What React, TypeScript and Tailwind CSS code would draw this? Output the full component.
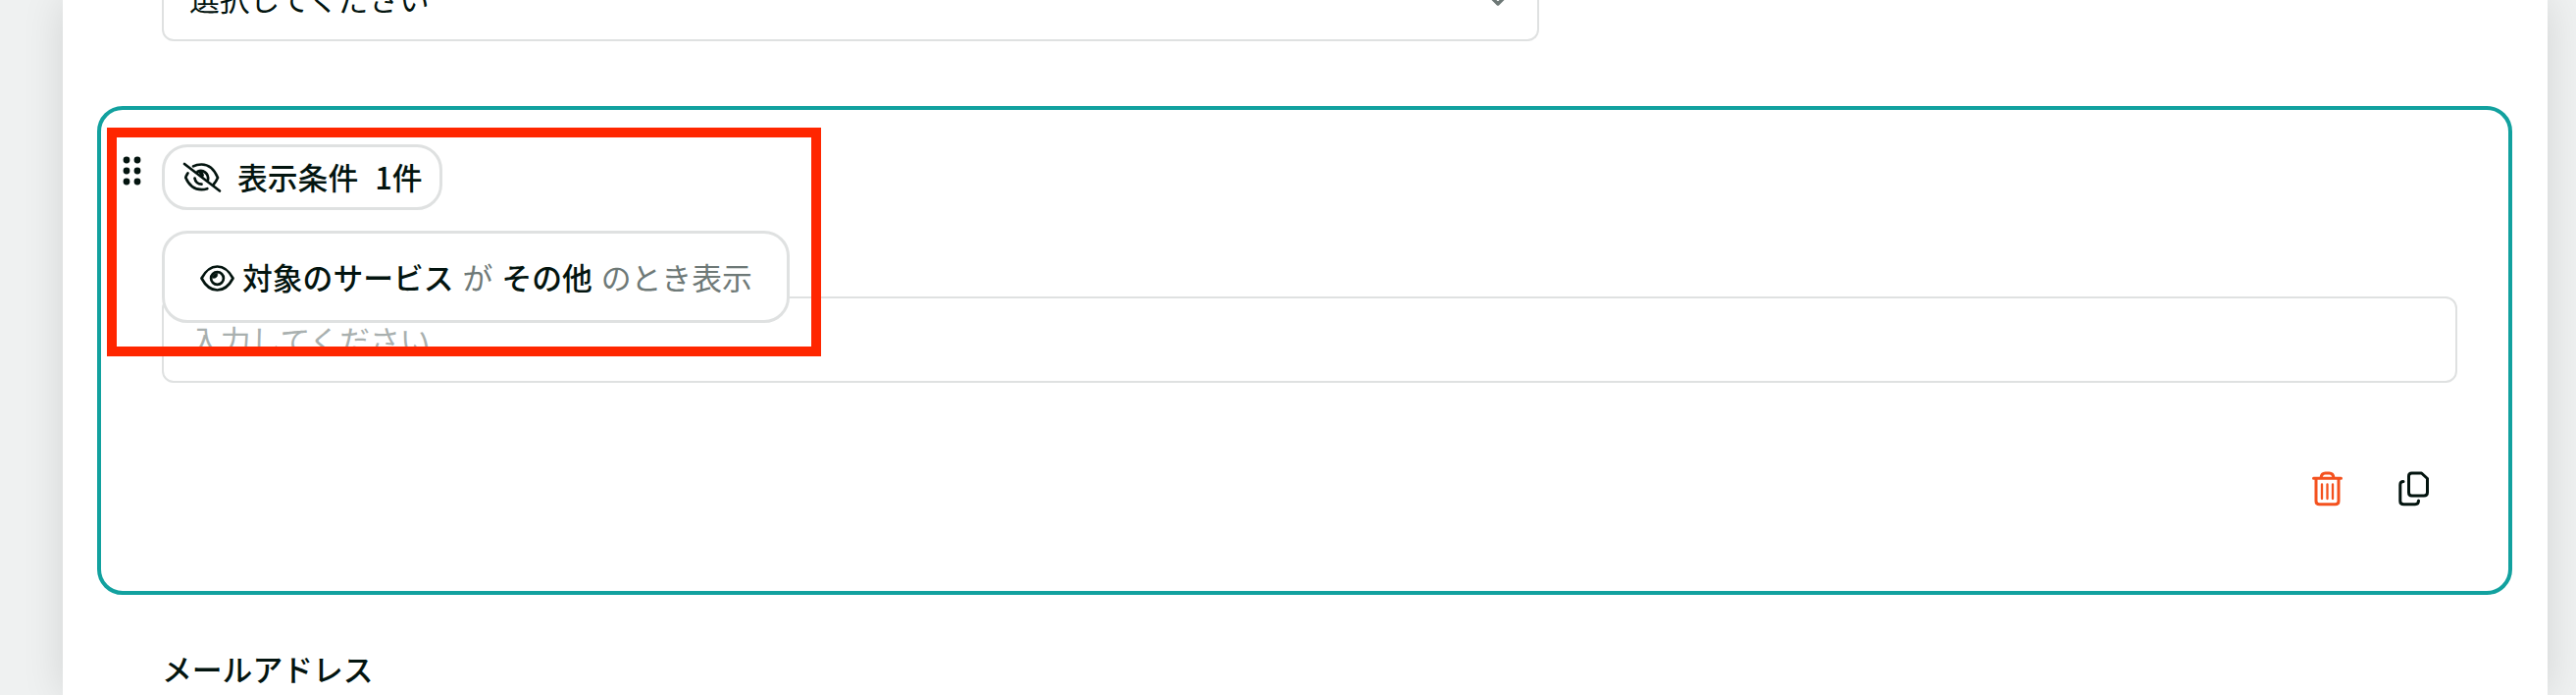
import React from "react";

const Eye = () => (
  <svg className="relative top-[1px] left-[0.5px] h-[27px] w-[35px] shrink-0 text-[#03140f]" viewBox="0 0 35 27" fill="none" stroke="currentColor" strokeWidth="2.7" strokeLinejoin="round">
    <path d="M1.5 13.5C6 5 11 1.500 17.5 1.500S29 5 33.5 13.5C29 22 24 25.500 17.5 25.500S6 22 1.500 13.500Z" />
    <circle cx="17.5" cy="13.500" r="6.400" />
    <path d="M17.600 8.500C18.400 11.500 16 14 12.600 13.200C12.600 10.800 14.600 8.500 17.600 8.500Z" fill="currentColor" strokeWidth="0.6" />
  </svg>
);

const EyeOff = () => (
  <svg className="relative left-[0.5px] h-[32px] w-[40px] shrink-0" viewBox="0 0 40 32" fill="none" stroke="currentColor" strokeWidth="2.7" strokeLinecap="round">
    <path d="M11 4.400C13.500 3 16.500 2.500 19.500 2.500C26 2.500 32 6.500 36 16C34.900 18.600 33.600 20.800 31.800 22.700" />
    <path d="M5.500 11.300C4.700 12.700 3.500 14.500 3.300 16C7 24.500 13 28.200 19.500 28.200C21.500 28.200 23.500 27.800 25.300 27.200" />
    <path d="M15.500 9.800C21 7 27 12 26 18.300" />
    <path d="M12.500 16.500C13 20 16 22.700 19.500 22.700" />
    <path d="M15.500 9.500L20.500 9.500L22 13.500L20.500 16.500Z" fill="currentColor" stroke="none" />
    <path d="M2 2L38 29.500" />
  </svg>
);

const Trash = () => (
  <svg className="h-[36px] w-[32px]" viewBox="0 0 32 36" fill="none" stroke="currentColor" strokeWidth="3" strokeLinecap="round" strokeLinejoin="round">
    <path d="M1.500 7.300H29.500M4 8V30.500Q4 33.700 7.500 33.700H23.500Q27 33.700 27 30.500V8M9 7Q9.500 2 13.500 2H17.500Q21.500 2 22 7" />
    <path d="M10 13.500V28M15.500 13.500V28M21 13.500V28" strokeWidth="2.300" />
  </svg>
);

const Copy = () => (
  <svg className="h-[36px] w-[32px]" viewBox="0 0 32 36" fill="none" stroke="currentColor" strokeWidth="3" strokeLinecap="round" strokeLinejoin="round">
    <path d="M13.500 2H23.500L29.500 7.500V21.500Q29.500 25 26 25H13.500Q10.500 25 10.500 21.500V5Q10.500 2 13.500 2Z" />
    <path d="M5 10.500Q1.800 10.500 1.800 14V30.500Q1.800 33.700 5.500 33.700H17Q20.500 33.700 20.500 30" />
  </svg>
);

const Grip = () => (
  <svg className="h-[30px] w-[19px]" viewBox="0 0 19 30" fill="currentColor">
    <circle cx="4" cy="4" r="3.400" /><circle cx="15" cy="4" r="3.400" />
    <circle cx="4" cy="15" r="3.400" /><circle cx="15" cy="15" r="3.400" />
    <circle cx="4" cy="26" r="3.400" /><circle cx="15" cy="26" r="3.400" />
  </svg>
);

export default function App() {
  return (
    <div lang="ja" className="h-[708px] w-[2626px] overflow-hidden bg-[#eff1f1] pr-[29px] pl-[64px] font-['Noto_Sans_CJK_JP',sans-serif] text-[30.8px] leading-[46px] text-[#03140f]">
      <main className="flex h-full flex-col bg-white pr-[36px] pl-[35px] shadow-[0_0_40px_rgba(3,20,15,0.12)]">
        <div className="ml-[66px] flex h-[42px] w-[1404px] shrink-0 items-end justify-between rounded-b-[12px] border-2 border-t-0 border-[#dfe1e1] pr-[32px] pb-[19px] pl-[26px]">
          <span>選択してください</span>
          <svg className="mb-[15px] h-[12px] w-[16px]" viewBox="0 0 16 12" fill="none" stroke="#6e7977" strokeWidth="3.500" strokeLinecap="round" strokeLinejoin="round">
            <path d="M1 3L8 10L15 3" />
          </svg>
        </div>
        <section className="relative mt-[66px] flex h-[498px] shrink-0 flex-col rounded-[26px] border-4 border-[#12a19f] pr-[52px] pl-[62px]">
          <div className="absolute top-[47px] left-[22px]"><Grip /></div>
          <div className="mt-[35px] flex h-[67px] w-[286px] shrink-0 items-center rounded-[26px] border-[3px] border-[#dfe1e1] pl-[17px] font-medium">
            <EyeOff />
            <span className="ml-[17px] pb-px">表示条件</span>
            <span className="ml-[17px] pb-px">1件</span>
          </div>
          <div className="mt-[88px] flex h-[88px] shrink-0 items-center rounded-[12px] border-2 border-[#dfe1e1] pl-[27px] text-[#a9b0af]">
            入力してください
          </div>
          <div className="absolute top-[123px] left-[62px] flex h-[94px] w-[640px] items-center rounded-[26px] border-[3px] border-[#dfe1e1] bg-white pl-[35px] text-[#6e7977]">
            <Eye />
            <span className="ml-[9px] font-medium text-[#03140f]">対象のサービス</span>
            <span className="ml-[9px]">が</span>
            <span className="ml-[9px] font-medium text-[#03140f]">その他</span>
            <span className="ml-[9px]">のとき表示</span>
          </div>
          <div className="absolute top-[18px] left-[6px] h-[233px] w-[728px] border-[10px] border-[#ff2600]" />
          <div className="mt-[90px] flex justify-end gap-[56px] pr-[28px]">
            <span className="text-[#f4511e]"><Trash /></span>
            <Copy />
          </div>
        </section>
        <div className="mt-[52px] ml-[66px] font-medium">メールアドレス</div>
      </main>
    </div>
  );
}
